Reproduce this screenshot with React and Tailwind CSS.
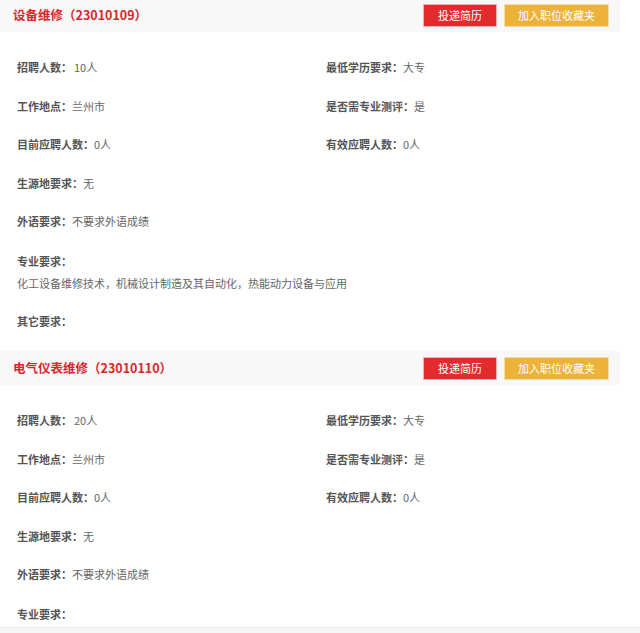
import React from 'react';

const jobs = [
  {
    title: '设备维修（23010109）',
    count: '10人',
    edu: '大专',
    place: '兰州市',
    test: '是',
    applied: '0人',
    valid: '0人',
    origin: '无',
    lang: '不要求外语成绩',
    major: '化工设备维修技术，机械设计制造及其自动化，热能动力设备与应用',
    other: '',
  },
  {
    title: '电气仪表维修（23010110）',
    count: '20人',
    edu: '大专',
    place: '兰州市',
    test: '是',
    applied: '0人',
    valid: '0人',
    origin: '无',
    lang: '不要求外语成绩',
    major: '',
    other: '',
  },
];

const font = { fontFamily: '"Microsoft YaHei", "Noto Sans CJK SC", sans-serif' };

function Field({ label, value, gap }) {
  return (
    <div className="h-[38.5px] flex items-center text-[11px] leading-[18px]">
      <span className="font-bold text-[#555]">{label}</span>
      <span className={`text-[#666] ${gap ? 'ml-[2px]' : ''}`}>{value}</span>
    </div>
  );
}

function JobBlock({ job }) {
  return (
    <section>
      <div className="h-[34px] bg-[#f8f8f8] flex items-center justify-between pl-[13px] pr-[11px]">
        <h2 className="text-[12.5px] font-bold text-[#d9272c]">{job.title}</h2>
        <div className="flex gap-[7px]">
          <button className="h-[23px] w-[74px] bg-[#e32b2f] border border-[#f0b0b0] text-white text-[11px]">投递简历</button>
          <button className="h-[23px] w-[105px] bg-[#ecb23a] border border-[#f6dca6] text-white text-[11px]">加入职位收藏夹</button>
        </div>
      </div>
      <div className="pl-[17px] pt-[16px] pb-[11px]">
        <div className="grid grid-cols-[309px_1fr]">
          <Field label="招聘人数：" value={job.count} gap />
          <Field label="最低学历要求：" value={job.edu} />
          <Field label="工作地点：" value={job.place} />
          <Field label="是否需专业测评：" value={job.test} />
          <Field label="目前应聘人数：" value={job.applied} />
          <Field label="有效应聘人数：" value={job.valid} />
          <Field label="生源地要求：" value={job.origin} />
          <div />
          <Field label="外语要求：" value={job.lang} />
          <div />
        </div>
        <div className="pt-[11px] text-[11px] leading-[18px]">
          <div className="font-bold text-[#555]">专业要求：</div>
          <div className="mt-[4px] h-[18px] text-[#666]">{job.major}</div>
        </div>
        <div className="mt-[10px]">
          <Field label="其它要求：" value={job.other} />
        </div>
      </div>
    </section>
  );
}

export default function App() {
  return (
    <div className="min-h-screen bg-white overflow-hidden" style={font}>
      <div className="w-[620px] -mt-[2px]">
        {jobs.map((job) => (
          <JobBlock key={job.title} job={job} />
        ))}
      </div>
      <div className="fixed bottom-0 left-0 right-0 h-[6px] bg-[#f7f7f7] border-t border-[#ececec]" />
    </div>
  );
}
